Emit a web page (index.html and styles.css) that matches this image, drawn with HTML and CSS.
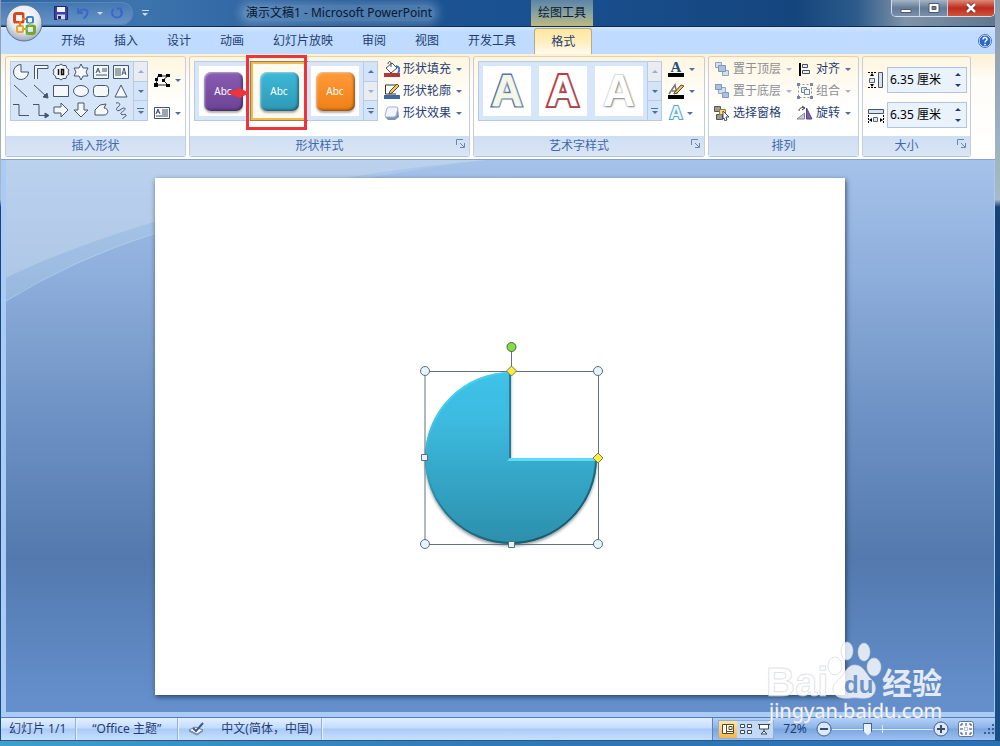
FILE: index.html
```html
<!DOCTYPE html>
<html lang="zh-CN">
<head>
<meta charset="utf-8">
<title>演示文稿1 - Microsoft PowerPoint</title>
<link rel="stylesheet" href="styles.css">
</head>
<body>
<div class="app">
  <header class="titlebar">
    <div class="qat">
      <button class="plain" aria-label="保存"><svg width="16" height="16" viewBox="0 0 16 16"><path d="M1.500 1.500h12l1 1v12h-13z" fill="#3c42a6" stroke="#20246e"/><path d="M4 2h8v5H4z" fill="#f4f6ff"/><path d="M4 9.500h8v5H4z" fill="#cfd6ee"/><path d="M5 11h3v3H5z" fill="#20246e"/></svg></button>
      <button class="plain" aria-label="撤消"><svg width="14" height="14" viewBox="0 0 14 14"><path d="M2 2v5h5M2.500 6.500C5 3 11 2 11.500 6c.2 3-2 5-4 6.500" fill="none" stroke="#3a68c4" stroke-width="2"/></svg></button>
      <span class="caret pale"></span>
      <button class="plain" aria-label="重复"><svg width="14" height="14" viewBox="0 0 14 14"><path d="M3.500 3a5 5 0 1 0 7 0M11 7V2.500H6.500" fill="none" stroke="#3a68c4" stroke-width="2"/></svg></button>
    </div>
    <button class="plain customize" aria-label="自定义快速访问工具栏"><span class="bar"></span><span class="caret pale"></span></button>
    <h1 class="title">演示文稿1 - Microsoft PowerPoint</h1>
    <span class="context">绘图工具</span>
    <div class="winbtns">
      <button aria-label="最小化"><svg width="12" height="12" viewBox="0 0 12 12"><path d="M1 7.500h10v3H1z" fill="#fff" stroke="#4b5b70"/></svg></button>
      <button aria-label="还原"><svg width="12" height="12" viewBox="0 0 12 12"><path d="M1 1.500h10v9H1z" fill="#fff" stroke="#4b5b70"/><path d="M4 4.500h4v3H4z" fill="#6b819b" stroke="#4b5b70"/></svg></button>
      <button class="close" aria-label="关闭"><svg width="12" height="12" viewBox="0 0 12 12"><path d="M2 2l8 8M10 2l-8 8" stroke="#5d2a2a" stroke-width="4"/><path d="M2 2l8 8M10 2l-8 8" stroke="#fff" stroke-width="2.500"/></svg></button>
    </div>
  </header>
  <button class="orb" aria-label="Office 按钮">
    <svg width="40" height="40" viewBox="0 0 40 40">
      <defs><radialGradient id="orb" cx=".5" cy=".35" r=".65"><stop offset="0" stop-color="#fff"/><stop offset=".6" stop-color="#e6eaf0"/><stop offset="1" stop-color="#9aa9bd"/></radialGradient></defs>
      <circle cx="21" cy="21" r="18" fill="url(#orb)" stroke="#5c7596"/>
      <g fill="none">
        <rect x="11.500" y="11.500" width="9" height="9" rx="2" stroke="#d4491b" stroke-width="3"/>
        <rect x="24" y="15" width="6" height="6" rx="1" stroke="#3a84cf" stroke-width="2"/>
        <rect x="14" y="24" width="6" height="6" rx="1" stroke="#f0a41c" stroke-width="2"/>
        <rect x="23.500" y="23.500" width="8" height="8" rx="2" stroke="#74a82c" stroke-width="3"/>
        <path d="M22 12v20M12 22h20" stroke="#fff"/>
        <path d="M19 17h4M17 19v5" stroke="#f07a22" stroke-width="2"/>
        <path d="M21 27h4M27 20v4" stroke="#8cbb7a" stroke-width="2"/>
      </g>
    </svg>
  </button>
  <nav class="tabs">
    <button>开始</button><button>插入</button><button>设计</button><button>动画</button><button>幻灯片放映</button><button>审阅</button><button>视图</button><button>开发工具</button><button class="active">格式</button>
    <button class="help" aria-label="帮助"><svg width="14" height="14" viewBox="0 0 14 14"><circle cx="7" cy="7" r="6" fill="#2868cc" stroke="#fff"/><circle cx="7" cy="7" r="6.500" fill="none" stroke="#4d72a8"/><path d="M5 5.500c0-3 4-2.500 4-.3C9 7 7 6.500 7 8.500M7 9.700v1.600" fill="none" stroke="#fff" stroke-width="1.500"/></svg></button>
  </nav>
  <section class="ribbon">
    <div class="group shapes">
      <div class="body">
        <div class="gallery">
          <div class="shapegrid">
            <svg viewBox="0 0 18 18"><path d="M9 1.500A7.500 7.500 0 1 0 16.500 9H9z"/></svg>
            <svg viewBox="0 0 18 18"><path d="M2.500 16V2.500H16v3H5.500V16"/></svg>
            <svg viewBox="0 0 18 18"><path d="M9 1l2 1.500h3l.5 2.500L17 7l-1 2 1 2-2.500 2-.5 2.500h-3L9 17l-2-1.500H4L3.500 13 1 11l1-2-1-2 2.500-2L4 2.500h3z"/><path d="M6.500 6v6M9.500 6.500v5h2v-5z" stroke="#111" stroke-width="1.500"/></svg>
            <svg viewBox="0 0 18 18"><path d="M9 1l2 4h5l-2 4 2 4h-5l-2 4-2-4H2l2-4-2-4h5z"/></svg>
            <svg viewBox="0 0 18 18"><path d="M1.500 2.500h15v13h-15zM4 10l2-5 2 5M5 8h2M10 6h5M10 8h5M4 12h11"/></svg>
            <svg viewBox="0 0 18 18"><path d="M1.500 2.500h15v13h-15zM4 5v8M6 5v8M8 5v8M10 12l2-7 2 7M11 10h3"/></svg>
            <svg viewBox="0 0 18 18"><path d="M2 3l13 12"/></svg>
            <svg viewBox="0 0 18 18"><path d="M2 3l13 12"/><path d="M16 16l-5-1 4-4z" fill="#44566f"/></svg>
            <svg viewBox="0 0 18 18"><path d="M1.500 3.500h15v11h-15z"/></svg>
            <svg viewBox="0 0 18 18"><ellipse cx="9" cy="9" rx="7.500" ry="5.500"/></svg>
            <svg viewBox="0 0 18 18"><rect x="1.500" y="3.500" width="15" height="11" rx="3"/></svg>
            <svg viewBox="0 0 18 18"><path d="M9 3l6 12H3z"/></svg>
            <svg viewBox="0 0 18 18"><path d="M1 3.500h6v11h10" fill="none"/></svg>
            <svg viewBox="0 0 18 18"><path d="M1 3.500h6v11h7" fill="none"/><path d="M13 12l4 2.500-4 2.500z" fill="#44566f"/></svg>
            <svg viewBox="0 0 18 18"><path d="M2 6h7V2l7 7-7 7v-4H2z"/></svg>
            <svg viewBox="0 0 18 18"><path d="M6 2h6v7h4l-7 7-7-7h4z"/></svg>
            <svg viewBox="0 0 18 18"><path d="M3 14v-5l5-5 6-1-2 4c5 0 5 7 0 7z"/></svg>
            <svg viewBox="0 0 18 18"><path d="M4 2c4-1 5 2 2 4s-1 5 2 3 5-3 5-1-5 3-4 5 4-1 5 1-4 2-3 4" fill="none"/></svg>
          </div>
          <div class="scroll"><button disabled aria-label="上一行"><i class="caret up"></i></button><button aria-label="下一行"><i class="caret"></i></button><button aria-label="其他"><span class="bar"></span><i class="caret"></i></button></div>
        </div>
        <div class="stack tall">
          <button class="cmd"><svg width="16" height="16" viewBox="0 0 16 16"><path d="M2 13l2-9h10l-5 4 5 5z" fill="#fff" stroke="#222"/><path d="M0 11h4v4H0zM1 6h3v3H1zM4 2h4v3H4zM12 2h4v3h-4zM8 7h3v3H8zM12 12h4v3h-4z" fill="#000"/></svg><i class="caret"></i></button>
          <button class="cmd"><svg width="16" height="16" viewBox="0 0 16 16"><path d="M.5 2.500h15v11H.5z" fill="#fff" stroke="#44546a"/><path d="M2 9l2-5 2 5M3 7h2M8 5h6M8 7h6M8 9h6M2 11h12" fill="none" stroke="#35486a"/></svg><i class="caret"></i></button>
        </div>
      </div>
      <h2>插入形状</h2>
    </div>

    <div class="group styles">
      <div class="body">
        <div class="gallery">
          <button class="swatch"><span class="chip purple">Abc</span></button>
          <button class="swatch chosen"><span class="chip teal">Abc</span></button>
          <button class="swatch"><span class="chip orange">Abc</span></button>
          <div class="scroll"><button aria-label="上一行"><i class="caret up"></i></button><button disabled aria-label="下一行"><i class="caret"></i></button><button aria-label="其他"><span class="bar"></span><i class="caret"></i></button></div>
        </div>
        <div class="stack">
          <button class="cmd"><svg width="16" height="16" viewBox="0 0 16 16"><path d="M0 12h16v4H0z" fill="#b4373c"/><path d="M2 7l6-5 5 5-6 5z" fill="#fff" stroke="#3d4d68"/><path d="M7 6V2c0-2-3-2-3 1" fill="none" stroke="#3d4d68"/><path d="M12 5c4 1 4 4 2 7" fill="none" stroke="#3977c8" stroke-width="2"/></svg>形状填充<i class="caret"></i></button>
          <button class="cmd"><svg width="16" height="16" viewBox="0 0 16 16"><path d="M0 12h16v4H0z" fill="#3c6aa8"/><path d="M13 2H1.500v9H12" fill="#fff" stroke="#333"/><path d="M5 11l1-3 7-7 2 2-7 7z" fill="#f3c760" stroke="#5b4b28"/></svg>形状轮廓<i class="caret"></i></button>
          <button class="cmd"><svg width="16" height="16" viewBox="0 0 16 16"><path d="M1 12l4-1 9-8 1 9-4 3H4z" fill="#7d95bb"/><path d="M5 2h8l1 1-2 8-2 1H2l-1-1 2-8z" fill="#f1f5fc" stroke="#a5b3ca"/></svg>形状效果<i class="caret"></i></button>
        </div>
      </div>
      <h2>形状样式<button class="launch" aria-label="形状样式设置"><svg width="9" height="9" viewBox="0 0 9 9"><use href="#launch"/></svg></button></h2>
      <div class="callout"><svg width="22" height="10" viewBox="0 0 22 10"><path d="M0 5L13 0l9 5-9 5z" fill="#ee343b"/></svg></div>
    </div>

    <div class="group wordart">
      <div class="body">
        <div class="gallery">
          <button class="letter a1">A</button><button class="letter a2">A</button><button class="letter a3">A</button>
          <div class="scroll"><button disabled aria-label="上一行"><i class="caret up"></i></button><button aria-label="下一行"><i class="caret"></i></button><button aria-label="其他"><span class="bar"></span><i class="caret"></i></button></div>
        </div>
        <div class="stack">
          <button class="cmd"><span class="fontfill">A</span><i class="caret"></i></button>
          <button class="cmd"><svg width="16" height="16" viewBox="0 0 16 16"><path d="M0 12h16v4H0z" fill="#000"/><path d="M1 11l6-9 2 9M4 8h5" fill="none" stroke="#777" stroke-width="1.500"/><path d="M6 10l7-8 3 1-7 7-3 1z" fill="#e8c36a" stroke="#5b4b28"/></svg><i class="caret"></i></button>
          <button class="cmd"><span class="fontglow">A</span><i class="caret close"></i></button>
        </div>
      </div>
      <h2>艺术字样式<button class="launch" aria-label="艺术字样式设置"><svg width="9" height="9" viewBox="0 0 9 9"><use href="#launch"/></svg></button></h2>
    </div>

    <div class="group arrange">
      <div class="body">
        <div class="stack">
          <button class="cmd" disabled><svg width="16" height="16" viewBox="0 0 16 16"><path d="M1.500 1.500h6v5h-6zM8.500 9.500h6v5h-6z" fill="#d4dfee" stroke="#8fa5c3"/><path d="M4.500 4.500h7v6h-7z" fill="#a9c1e2" stroke="#7f97b8"/></svg>置于顶层<i class="caret"></i></button>
          <button class="cmd" disabled><svg width="16" height="16" viewBox="0 0 16 16"><path d="M4.500 4.500h7v6h-7z" fill="#d4dfee" stroke="#8fa5c3"/><path d="M1.500 1.500h6v5h-6zM8.500 9.500h6v5h-6z" fill="#a9c1e2" stroke="#7f97b8"/></svg>置于底层<i class="caret"></i></button>
          <button class="cmd"><svg width="16" height="16" viewBox="0 0 16 16"><path d="M.5 1.500h6v5h-6zM2.500 9.500h6v5h-6z" fill="#9a9a96" stroke="#555"/><path d="M5.500 4.500h6v5h-6z" fill="#ffd476" stroke="#a07a2e"/><path d="M9 6l6 6h-3l1 3-2 1-1-3-1 1z" fill="#fff" stroke="#3b4d73"/></svg>选择窗格</button>
        </div>
        <div class="stack">
          <button class="cmd"><svg width="16" height="16" viewBox="0 0 16 16"><path d="M3 2v13" stroke="#000" stroke-width="2"/><path d="M5.500 3.500h5v3h-5zM5.500 9.500h7v3h-7z" fill="#e5edf8" stroke="#444f66"/></svg>对齐<i class="caret"></i></button>
          <button class="cmd" disabled><svg width="16" height="16" viewBox="0 0 16 16"><path d="M1.500 1.500h13v13h-13z" fill="none" stroke="#8a94a4" stroke-dasharray="2"/><path d="M4.500 4.500h5v5h-5z" fill="#e3e9f1" stroke="#78869b"/><path d="M7.500 6.500h5v5h-5z" fill="#f4f7fb" stroke="#78869b"/><path d="M0 0h3v3H0zM13 0h3v3h-3zM0 13h3v3H0zM13 13h3v3h-3z" fill="#78869b"/></svg>组合<i class="caret"></i></button>
          <button class="cmd"><svg width="16" height="16" viewBox="0 0 16 16"><path d="M9.500 3L15 14H9.500z" fill="#7c62a8" stroke="#56428a"/><path d="M7.500 8v6H0z" fill="#c8ced6" stroke="#7c8795"/><path d="M2 6c0-3 3-4 5-3M5 1l3 2-3 2" fill="none" stroke="#333"/></svg>旋转<i class="caret"></i></button>
        </div>
      </div>
      <h2>排列</h2>
    </div>

    <div class="group size">
      <div class="body">
        <div class="field"><label for="h" aria-label="形状高度"><svg width="16" height="18" viewBox="0 0 16 18"><path d="M10.500 1.500h4v15h-4z" fill="#d9e3f0" stroke="#44536b"/><path d="M1.500 7.500h5v4h-5z" fill="#dfe7f2" stroke="#55647b"/><path d="M0 1.500h9M0 16.500h9" stroke="#000" stroke-dasharray="2 1"/><path d="M4 2l-2 3h4zM4 16l-2-3h4z" fill="#000"/></svg></label><span class="spin"><input id="h" type="text" value="6.35 厘米"><span class="steps"><button aria-label="增加高度"><i class="caret up"></i></button><button aria-label="减小高度"><i class="caret"></i></button></span></span></div>
        <div class="field"><label for="w" aria-label="形状宽度"><svg width="16" height="18" viewBox="0 0 16 18"><path d="M.5 3.500h15v4H.5z" fill="#d9e3f0" stroke="#44536b"/><path d="M5.500 11.500h4v4h-4z" fill="#dfe7f2" stroke="#55647b"/><path d="M.5 9v8M15.500 9v8" stroke="#000" stroke-dasharray="2 1"/><path d="M1 14l3-2v4zM15 14l-3-2v4z" fill="#000"/></svg></label><span class="spin"><input id="w" type="text" value="6.35 厘米"><span class="steps"><button aria-label="增加宽度"><i class="caret up"></i></button><button aria-label="减小宽度"><i class="caret"></i></button></span></span></div>
      </div>
      <h2>大小<button class="launch" aria-label="大小设置"><svg width="9" height="9" viewBox="0 0 9 9"><g id="launch"><path d="M.5 6V.5H7M4 4l4 4M8.500 4v4.500H4" fill="none" stroke="#6c86ab"/></g></svg></button></h2>
    </div>
  </section>

  <main class="workspace">
    <svg class="swoosh" width="480" height="150" viewBox="0 0 480 150"><path d="M0 0H480C300 16 120 60 0 118z" fill="#cfe2f2" opacity=".5"/><path d="M0 118C120 60 300 16 480 0C300 22 110 72 0 141z" fill="#c0daf0" opacity=".3"/><path d="M0 141Q70 98 150 73" fill="none" stroke="#bcd6f2" opacity=".6"/></svg>
    <div class="slide">
      <svg class="shape" width="200" height="225" viewBox="0 0 200 225">
        <defs>
          <linearGradient id="pie" x2="0" y2="1"><stop offset="0" stop-color="#3fc2e8"/><stop offset=".25" stop-color="#3dbce1"/><stop offset="1" stop-color="#2c8fac"/></linearGradient>
          <linearGradient id="rim" x1="0" y1="0" x2=".6" y2="1"><stop offset="0" stop-color="#55e4ff"/><stop offset=".35" stop-color="#37b5d5"/><stop offset=".65" stop-color="#23798f"/><stop offset="1" stop-color="#1b5c70"/></linearGradient>
          <filter id="soft" x="-10%" y="-10%" width="120%" height="120%"><feDropShadow dx="0" dy="2" stdDeviation="1.500" flood-opacity=".4"/></filter>
        </defs>
        <path d="M101 42A86 86 0 1 0 187 128H101z" fill="url(#pie)" filter="url(#soft)"/>
        <path d="M101 43A85 85 0 1 0 186 128" fill="none" stroke="url(#rim)" stroke-width="2"/>
        <path d="M100 44v84" stroke="#237d98" stroke-width="2"/><path d="M97 131l3-3h86v3z" fill="#5cdcf6"/>
        <path d="M15 41.500h173.500v173H15zM101.500 41V21" fill="none" stroke="#60727e"/>
        <g fill="#e6f3f8" stroke="#58707e"><circle cx="15" cy="41" r="4.500"/><circle cx="188" cy="41" r="4.500"/><circle cx="15" cy="214" r="4.500"/><circle cx="188" cy="214" r="4.500"/><path d="M11.500 124.500h6v6h-6zM98.500 211.500h6v6h-6z"/></g>
        <circle cx="101.500" cy="17" r="4.500" fill="#84dc48" stroke="#3f6e35"/>
        <path d="M101.500 36l5 5-5 5-5-5zM188 123l5 5-5 5-5-5z" fill="#ffec45" stroke="#7d7a42"/>
      </svg>
    </div>
  </main>

  <footer class="status">
    <span class="cell">幻灯片 1/1</span>
    <span class="cell theme">“Office 主题”</span>
    <button class="cell spell"><svg width="17" height="16" viewBox="0 0 17 16"><path d="M1 9l6-3 8 3-6 4z" fill="#fff" stroke="#72829b"/><path d="M1 10l8 4 6-4" fill="none" stroke="#72829b"/><path d="M5 7l3 3 7-8" fill="none" stroke="#3e589d" stroke-width="2"/></svg></button>
    <button class="cell lang">中文(简体，中国)</button>
    <div class="tools">
      <div class="views">
        <button class="on" aria-label="普通视图"><svg width="14" height="12" viewBox="0 0 14 12"><path d="M1.500 1.500h11v9h-11zM5.500 1v9M8 3.500h3v3H8zM6 8.500h6" fill="#fff" stroke="#5a4a26"/></svg></button>
        <button aria-label="幻灯片浏览"><svg width="14" height="12" viewBox="0 0 14 12"><path d="M1.500 1.500h4v3h-4zM8.500 1.500h4v3h-4zM1.500 7.500h4v3h-4zM8.500 7.500h4v3h-4z" fill="#fff" stroke="#364764"/></svg></button>
        <button aria-label="幻灯片放映"><svg width="14" height="12" viewBox="0 0 14 12"><path d="M1 1.500h12M2.500 2v4h9V2M7 6v3M4 11l3-3 3 3z" fill="#fff" stroke="#364764"/></svg></button>
      </div>
      <button class="pct">72%</button>
      <button class="round" aria-label="缩小"><svg width="16" height="16" viewBox="0 0 16 16"><circle cx="8" cy="8" r="7" fill="#dbe9fb" stroke="#45608b"/><path d="M4 8h8" stroke="#3b4d6b" stroke-width="2"/></svg></button>
      <input class="zoom" type="range" min="0" max="100" value="34" aria-label="显示比例">
      <button class="round" aria-label="放大"><svg width="16" height="16" viewBox="0 0 16 16"><circle cx="8" cy="8" r="7" fill="#dbe9fb" stroke="#45608b"/><path d="M4 8h8M8 4v8" stroke="#3b4d6b" stroke-width="2"/></svg></button>
      <button class="fit" aria-label="适应窗口"><svg width="16" height="16" viewBox="0 0 16 16"><rect x=".5" y=".5" width="15" height="15" rx="2" fill="#f4f8ff" stroke="#5f7799"/><path d="M6.500 6.500h3v3h-3z" fill="none" stroke="#8594aa" stroke-dasharray="1"/><path d="M8 2v3M8 11v3M2 8h3M11 8h3M3 5V3h2M11 3h2v2M13 11v2h-2M5 13H3v-2" fill="none" stroke="#35486a"/></svg></button>
      <svg width="12" height="12" viewBox="0 0 12 12"><path d="M9 1h2v2H9zM5 5h2v2H5zM9 5h2v2H9zM1 9h2v2H1zM5 9h2v2H5zM9 9h2v2H9z" fill="#3f5f92"/></svg>
    </div>
  </footer>
  <svg class="mark" width="190" height="92" viewBox="0 0 190 92">
    <g fill="#fff" fill-opacity=".8" stroke="#ccd0d4" stroke-opacity=".6">
      <ellipse cx="72" cy="29" rx="7" ry="9"/><ellipse cx="84" cy="14" rx="6" ry="9"/><ellipse cx="101" cy="15" rx="6" ry="9"/><ellipse cx="111" cy="30" rx="7" ry="9"/>
      <path d="M92 28c9 0 11 10 17 15 6 6 4 17-5 18-7 1-10-1-16 0-8 1-16 0-18-7-1-8 5-10 9-15 4-5 6-11 13-11z"/>
      <text x="3" y="59" class="logo">Bai</text>
    </g>
    <text x="81" y="56" class="du">du</text>
    <text x="119" y="57" class="cn">经验</text>
    <text x="6" y="81" class="url">jingyan.baidu.com</text>
  </svg>
</div>
</body>
</html>
```

FILE: styles.css
```css
* { box-sizing: border-box; }
body {
  margin: 0;
  height: 100vh;
  overflow: hidden;
  font: 12px/16px "Noto Sans", "Noto Sans CJK SC", sans-serif;
  color: #1e3d73;
  background: linear-gradient(90deg, #3f9fcd, #2e79b8 50%, #2a70b5);
}
button {
  font: inherit;
  color: inherit;
  border: 0;
  padding: 0;
  margin: 0;
  background: none;
  display: flex;
  align-items: center;
  justify-content: center;
}
h1, h2 { margin: 0; font: inherit; }
svg { display: block; flex: none; }

.app {
  position: relative;
  display: flex;
  flex-direction: column;
  height: calc(100vh - 5px);
  border-style: solid;
  border-image: linear-gradient(#8b9bac, #a7bac5 27%, #174477 28%, #174f86) 1;
  border-width: 0 5px 0 1px;
}

.caret {
  width: 0;
  height: 0;
  border: 3px solid transparent;
  border-top-color: #50709c;
  border-bottom-width: 0;
}
.caret.up { border-top-width: 0; border-bottom: 3px solid #50709c; }
.caret.pale { border-top-color: #c9dcf3; }
button:disabled .caret { opacity: 0.5; }
.bar { width: 7px; height: 1px; margin-bottom: 2px; background: #50709c; }

/* Title bar */
.titlebar {
  display: flex;
  align-items: center;
  height: 27px;
  border-bottom: 1px solid #0e2b50;
  background: linear-gradient(90deg, #2f66a1, #3d74ae 14%, #3268a4 24%, #1f5594 34%, #195090 55%, #15457d 80%, #2c5a8a 86%, #8193a8 91%, #60788f);
}
.qat {
  display: flex;
  align-items: center;
  gap: 7px;
  width: 132px;
  height: 23px;
  padding-left: 52px;
  border: 1px solid #5b87b8;
  border-left: 0;
  border-radius: 0 12px 12px 0;
  background: linear-gradient(#4478b2, #6693c6);
}
.customize { flex-direction: column; width: 24px; }
.customize .bar { background: #c9dcf3; }
.title {
  margin-left: 86px;
  padding: 0 3px;
  color: #07182f;
  border-radius: 8px;
  background: rgba(190, 215, 240, 0.3);
  box-shadow: 0 0 8px 4px rgba(190, 215, 240, 0.3);
}
.context {
  align-self: stretch;
  margin-left: 96px;
  padding: 5px 7px;
  color: #0b1c33;
  background: linear-gradient(#5c84a6, #91a79f 60%, #c2b879);
}
.winbtns {
  display: flex;
  align-self: flex-start;
  margin-left: auto;
  border: 1px solid #d4dfeb;
  border-top: 0;
  border-radius: 0 0 5px 5px;
  overflow: hidden;
}
.winbtns button {
  width: 28px;
  height: 16px;
  border-right: 1px solid #c5d0dc;
  background: linear-gradient(#a5b5c7, #637a96 50%, #7b90aa);
}
.winbtns .close { width: 46px; border: 0; background: linear-gradient(#dc8a78, #bd2b1c 50%, #d2543a); }
.orb { position: absolute; left: 2px; top: 2px; }

/* Tabs */
.tabs { display: flex; height: 27px; padding: 1px 3px 0 45px; background: linear-gradient(#d3e5ff, #bfdbff 20%); }
.tabs button { padding: 0 15px; margin-right: -1px; white-space: nowrap; }
.tabs .active {
  margin-left: 4px;
  padding: 0 16px;
  border: 1px solid #b9ab80;
  border-bottom: 0;
  border-radius: 3px 3px 0 0;
  background: linear-gradient(#ffe6a0, #ffeebd 50%, #fffaf0);
}
.tabs .help { margin-left: auto; margin-right: 0; padding: 0; }

/* Ribbon */
.ribbon {
  display: flex;
  gap: 3px;
  height: 106px;
  padding: 2px 4px;
  border-bottom: 1px solid #8ba3c1;
  background: linear-gradient(#fdf0d4, #fffdf8 25%, #fff);
}
.group {
  position: relative;
  display: flex;
  flex-direction: column;
  border: 1px solid;
  border-color: #e6d3ad #c3cddc #b4c2d6;
  border-radius: 3px;
  background: linear-gradient(#fff6e1, #fff 50%);
}
.shapes { width: 181px; }
.styles { width: 281px; }
.wordart { width: 232px; }
.arrange { width: 151px; }
.size { width: 109px; }
.group .body { flex: 1; display: flex; align-items: flex-start; gap: 6px; padding: 4px 4px 0; }
.group h2 {
  position: relative;
  height: 20px;
  line-height: 20px;
  text-align: center;
  color: #3d6aaa;
  background: linear-gradient(#cfdff3, #dae5f5);
}
.styles h2, .wordart h2, .size h2 { padding-right: 20px; }
.launch { position: absolute; right: 4px; top: 3px; }

.gallery { display: flex; height: 60px; border: 1px solid #b6cbe6; background: #d6e6f8; }
.shapegrid { display: grid; grid-template-columns: repeat(6, 20px); align-items: center; justify-items: center; width: 122px; }
.shapegrid svg { width: 18px; height: 18px; fill: #f4f8f8; stroke: #44566f; }
.scroll { display: flex; flex-direction: column; width: 14px; border-left: 1px solid #b6cbe6; }
.scroll button { flex: 1; flex-direction: column; border-bottom: 1px solid #b6cbe6; background: #d3e3f8; }
.scroll button:last-child { border-bottom: 0; }
.scroll button:disabled { background: #e9edf2; }

.swatch { width: 56px; border: 4px solid #d6e6f8; background: #fff; }
.swatch.chosen { border: 2px solid #f1b94f; outline: 1px solid #998052; background: #fffaf0; }
.chip {
  display: grid;
  place-items: center;
  width: 39px;
  height: 39px;
  font-size: 10px;
  color: #fff;
  border-radius: 7px;
  box-shadow: inset 1px 1px 2px rgba(255, 255, 255, 0.5), inset -1px -1px 3px rgba(0, 0, 0, 0.5), 0 2px 2px rgba(0, 0, 0, 0.3);
}
.purple { background: linear-gradient(#8a5bb2, #6b4494); }
.teal { background: linear-gradient(#3cb9d8, #2e98b5); }
.orange { background: linear-gradient(#ff9a3a, #ef7f15); }

.stack { display: flex; flex-direction: column; }
.cmd { height: 22px; gap: 3px; justify-content: flex-start; white-space: nowrap; }
.cmd .caret { margin-left: 2px; }
.cmd .caret.close { margin-left: 0; }
.body > .stack { margin-top: -3px; }
.body > .stack.tall { gap: 11px; margin-top: 8px; }
.cmd:disabled { color: #8b8f97; }
.arrange .body { gap: 5px; padding-left: 5px; }

.letter {
  width: 56px;
  border: 4px solid #d6e6f8;
  background: #fff;
  font: bold 44px/48px "Liberation Sans", sans-serif;
  paint-order: stroke fill;
}
.a1 { color: #f3f6e8; -webkit-text-stroke: 3px #54749c; text-shadow: 1px 1px 2px #b9c0c8; }
.a2 { color: #fff; -webkit-text-stroke: 4px #c4373c; text-shadow: 1px 1px 2px #777; }
.a3 { color: #fff; -webkit-text-stroke: 2px #dedede; text-shadow: 1px 1px 2px #888; }
.fontfill { width: 16px; height: 16px; border-bottom: 4px solid #000; font: bold 15px/12px "Liberation Serif", serif; text-align: center; color: #274a80; }
.fontglow { width: 16px; font: bold 18px/18px "Liberation Sans", sans-serif; color: #eaf6fb; -webkit-text-stroke: 2px #58a6ca; paint-order: stroke fill; text-shadow: 0 0 2px #58a6ca; }

.group.size .body { flex-direction: column; gap: 9px; padding: 10px 3px 0 5px; }
.field { display: flex; align-items: center; gap: 3px; width: 100%; }
.spin { display: flex; flex: 1; height: 26px; min-width: 0; border: 1px solid #aec4e0; background: #eaf2fb; }
.spin input { flex: 1; width: 0; padding: 0 2px; border: 0; background: none; font: inherit; color: #000; }
.steps { display: flex; flex-direction: column; justify-content: center; gap: 1px; width: 17px; }
.steps button { height: 10px; }
.steps .caret { border-top-color: #25416e; }
.steps .caret.up { border-bottom-color: #25416e; }

/* Workspace */
.workspace {
  position: relative;
  flex: 1;
  display: flex;
  justify-content: center;
  padding: 18px 0 17px;
  border: solid #a9cbf5;
  border-width: 0 1px 5px 5px;
  background: linear-gradient(#a5c2ea, #8fafdc 20%, #6f93c5 45%, #5379ae 72%, #648fcb 98%);
}
.swoosh { position: absolute; left: 0; top: 0; }
.slide { position: relative; width: calc(100% - 298px); background: #fff; box-shadow: 1px 2px 5px rgba(20, 40, 70, 0.75); }
.shape { position: absolute; left: 255px; top: 152px; }

/* Status bar */
.status {
  display: flex;
  height: 24px;
  border-top: 1px solid #567db3;
  border-bottom: 1px solid #30568c;
  background: linear-gradient(#e3efff, #c4dcff 45%, #a9caf7 50%, #c8e0ff);
}
.cell { display: flex; align-items: center; padding: 0 9px 0 8px; white-space: nowrap; border-right: 1px solid #8fb1dd; box-shadow: 1px 0 #eaf3ff; }
.theme { padding: 0 16px; }
.spell { padding: 0 10px; border: 0; box-shadow: none; }
.lang { padding: 0 8px 0 6px; }
.tools {
  display: flex;
  align-items: center;
  margin-left: auto;
  padding: 0 0 0 5px;
  border-left: 1px solid #5e83b6;
  background: linear-gradient(#b4d1f8, #8cb3e8 45%, #7aa5e0 50%, #9dc1f0);
}
.views { display: flex; border: 1px solid #91aed6; background: #c4d9f5; }
.views button { width: 18px; height: 17px; }
.views .on { background: linear-gradient(#ffe5a1, #f7b64c); }
.pct { width: 42px; }
.zoom {
  appearance: none;
  width: 101px;
  height: 16px;
  margin: 0;
  background: linear-gradient(#dceafc, #dceafc) center / 100% 1px no-repeat, linear-gradient(#dceafc, #dceafc) center / 1px 8px no-repeat;
}
.zoom::-webkit-slider-thumb {
  appearance: none;
  width: 9px;
  height: 13px;
  background: linear-gradient(90deg, #45608b 1px, #e8f1fd 1px 8px, #45608b 8px);
  border-top: 1px solid #45608b;
  clip-path: polygon(0 0, 100% 0, 100% 65%, 50% 100%, 0 65%);
}
.fit { margin: 0 9px; }

.mark { position: absolute; right: 42px; bottom: 12px; pointer-events: none; }
.logo { font: bold 40px "Liberation Sans", sans-serif; }
.du { font: bold 24px "Liberation Sans", sans-serif; fill: #6d91c5; }
.cn { font: bold 30px "Noto Sans CJK SC", sans-serif; fill: #e3ebf6; }
.url { font: 20px "Noto Sans", sans-serif; fill: #fff; stroke: #ccd0d4; stroke-opacity: 0.4; }
.callout { position: absolute; left: 56px; top: -2px; width: 61px; height: 75px; border: 3px solid #ee343b; }
.callout svg { position: absolute; right: 55px; top: 30px; }
```
